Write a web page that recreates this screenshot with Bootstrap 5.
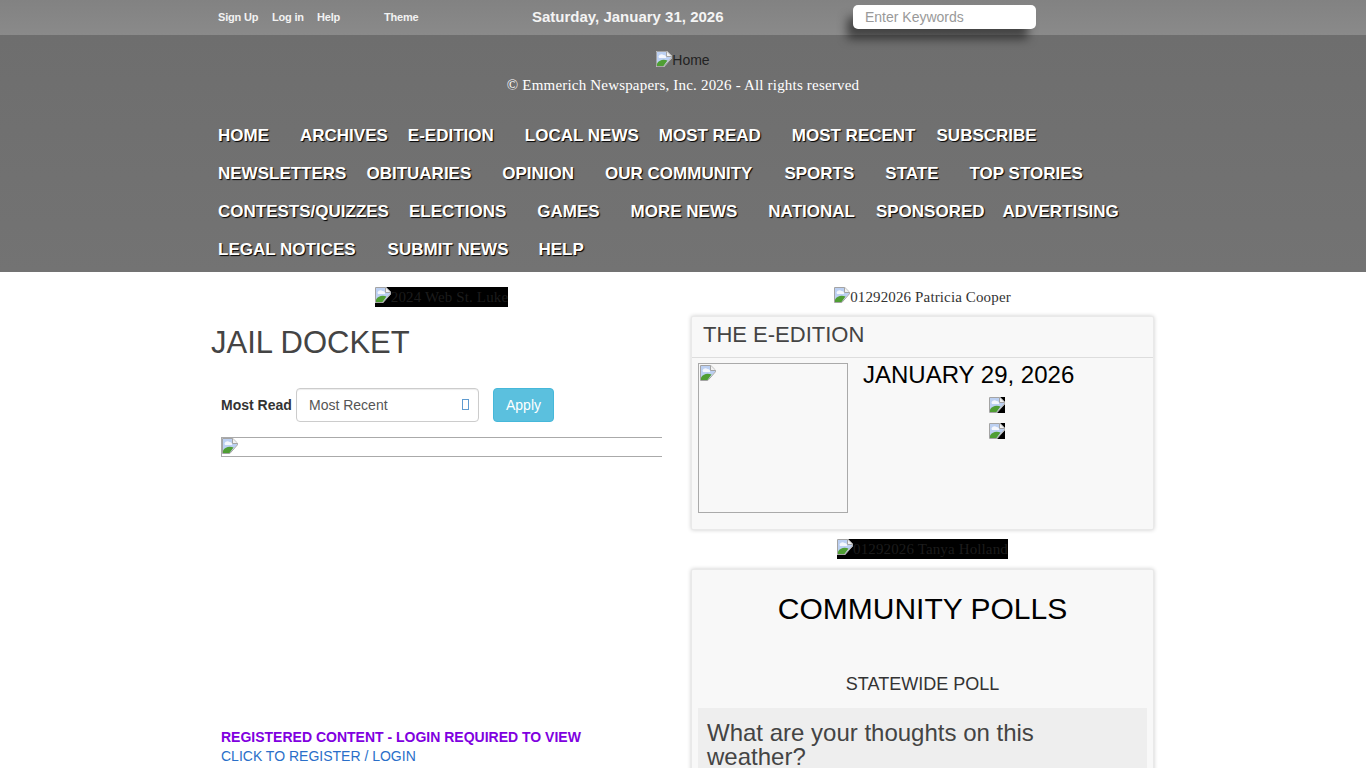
<!DOCTYPE html>
<html lang="en">
<head>
    <meta charset="UTF-8">
    <meta name="viewport" content="width=device-width, initial-scale=1.0">
    <title>Jail Docket</title>
    <link rel="stylesheet" href="https://cdn.jsdelivr.net/npm/bootstrap@5.3.2/dist/css/bootstrap.min.css">
    <style>
        body { font-family: "Liberation Sans", Arial, sans-serif; font-size: 14px; color: #333; background: #fff; }
        a { text-decoration: none; }

        .top-strip { height: 35px; background: linear-gradient(#828282, #8a8a8a); color: #fff; }
        .top-inner, .nav-inner { width: 930px; margin: 0 auto; }
        .top-link { font-size: 11px; font-weight: 700; color: #f2f2f2; letter-spacing: -.2px; }
        .top-link-signup { width: 54px; }
        .top-link-login { width: 45px; }
        .top-link-help { width: 67px; }
        .top-link-theme { width: 148px; }
        .top-date { width: 321px; font-size: 15px; font-weight: 700; color: #f4f4f4; }
        .search-box { width: 183px; height: 24px; border: 0; border-radius: 5px; padding: 0 12px; font-size: 14px; margin-top: -1px; box-shadow: -7px 11px 10px -1px rgba(0, 0, 0, .5); position: relative; z-index: 2; }
        .search-box::placeholder { color: #999; opacity: 1; }

        .head-band { height: 237px; background: linear-gradient(#6e6e6e, #737373); }
        .home-line { padding-top: 16px; height: 34px; line-height: 18px; color: #222; }
        .copy-line { font-family: "Liberation Serif", serif; font-size: 15px; letter-spacing: .19px; line-height: 18px; color: #fff; margin-top: 7px; }
        .nav-wrap { margin-top: 32px; row-gap: 18px; }
        .nav-item-link { font-size: 17px; line-height: 20px; font-weight: 700; color: #fff; text-shadow: 1px 1px 1px #000; white-space: nowrap; }
        .gap-wide { margin-right: 31px; }
        .gap-wider { margin-right: 32px; }
        .gap-snug { margin-right: 30px; }
        .gap-narrow { margin-right: 20px; }
        .gap-mid { margin-right: 21px; }
        .gap-slim { margin-right: 18px; }

        .broken-pic { width: 16px; height: 16px; flex: none; vertical-align: top; }
        .page-cols { width: 944px; margin: 0 auto; padding-top: 15px; }
        .left-col { width: 461px; margin-right: 19px; }
        .right-col { width: 463px; }
        .ad-wrap { height: 20px; }
        .ad-box { height: 20px; line-height: 20px; font-family: "Liberation Serif", serif; font-size: 15px; letter-spacing: .13px; color: #333; }
        .ad-dark { background: #000; color: #1c1c1c; }

        .page-title { font-size: 31px; line-height: 35px; color: #444; margin: 18px 0 0; font-weight: 400; }
        .filter-row { padding: 28px 0 0 10px; }
        .filter-label { font-weight: 700; width: 75px; }
        .pick-wrap { width: 183px; }
        .pick-box { height: 34px; padding: 0 12px; font-size: 14px; color: #555; border: 1px solid #ccc; border-radius: 4px; background-image: none; box-shadow: inset 0 1px 1px rgba(0, 0, 0, .075); }
        .pick-tofu { right: 10px; top: 11px; width: 7px; height: 11px; border: 1px solid #5f9bd0; }
        .apply-btn { width: 61px; height: 34px; margin-left: 14px; padding: 0; font-size: 14px; color: #fff; background: #5bc0de; border: 1px solid #46b8da; border-radius: 4px; }
        .pic-strip { height: 20px; margin: 15px 10px 0 10px; border: 1px solid #aaa; border-right: 0; line-height: 0; padding: 0; }
        .reg-block { margin: 271px 0 0 10px; line-height: 19px; }
        .reg-need { font-weight: 700; color: #8000e0; }
        .reg-link { color: #2a6fc9; }

        .side-card { background: #f8f8f8; border: 1px solid #e9e9e9; box-shadow: 0 0 4px rgba(0, 0, 0, .2); border-radius: 2px; }
        .edition-card { height: 214px; margin-top: 9px; }
        .edition-head { height: 41px; padding: 0 11px; font-size: 22px; line-height: 36px; color: #444; border-bottom: 1px solid #ddd; }
        .edition-body { padding: 5px 6px; }
        .cover-box { width: 150px; height: 150px; border: 1px solid #aaa; padding: 1px; }
        .edition-info { padding-right: 2px; }
        .edition-date { font-size: 24px; line-height: 24px; color: #000; padding: 0 0 2px 15px; }
        .info-pic { height: 26px; }
        .info-pic .broken-pic { background: #000; }
        .second-ad { margin-top: 9px; }
        .polls-card { margin-top: 10px; height: 260px; padding: 0 6px; }
        .polls-title { font-size: 30px; line-height: 36px; color: #000; padding-top: 21px; margin: 0; font-weight: 400; }
        .polls-sub { font-size: 18px; line-height: 20px; color: #333; margin: 47px 0 14px; font-weight: 400; }
        .poll-question { background: #eee; padding: 13px 9px; font-size: 24px; line-height: 24px; color: #444; }
    </style>
</head>
<body>
    <svg width="0" height="0" class="d-block position-absolute">
        <symbol id="brokenIcon" viewBox="0 0 16 16">
            <path d="M0 0H11L16 5V7L8 16H0Z" fill="#fff"/>
            <path d="M1 1H10.5L15 5.5V7L7.5 15H1Z" fill="#bcd0f2"/>
            <path d="M2.5 5.5C3.5 3 6 2.5 7.5 4C9.5 4 10.5 5.5 10 7H3Z" fill="#f4f7fd"/>
            <path d="M1 15V12.5C3.5 9 7 8 11.5 9.5L7.5 15Z" fill="#4f9e33"/>
            <path d="M0.5 15.5V0.5H10.8L15.5 5.2V6.8L7.8 15.5Z" fill="none" stroke="#a4a4a4"/>
            <path d="M10.5 .5V5.5H15.5" fill="#f2f2f2" stroke="#a4a4a4"/>
        </symbol>
    </svg>

    <div class="top-strip">
        <div class="top-inner d-flex align-items-center h-100">
            <a href="#" class="top-link top-link-signup">Sign Up</a>
            <a href="#" class="top-link top-link-login">Log in</a>
            <a href="#" class="top-link top-link-help">Help</a>
            <a href="#" class="top-link top-link-theme">Theme</a>
            <div class="top-date">Saturday, January 31, 2026</div>
            <input type="text" class="search-box" placeholder="Enter Keywords">
        </div>
    </div>

    <div class="head-band">
        <div class="home-line text-center"><svg class="broken-pic"><use href="#brokenIcon"/></svg>Home</div>
        <div class="copy-line text-center">© Emmerich Newspapers, Inc. 2026 - All rights reserved</div>
        <div class="nav-inner nav-wrap d-flex flex-wrap align-items-baseline">
            <a href="#" class="nav-item-link gap-wide">HOME</a>
            <a href="#" class="nav-item-link gap-narrow">ARCHIVES</a>
            <a href="#" class="nav-item-link gap-wide">E-EDITION</a>
            <a href="#" class="nav-item-link gap-narrow">LOCAL NEWS</a>
            <a href="#" class="nav-item-link gap-wide">MOST READ</a>
            <a href="#" class="nav-item-link gap-mid">MOST RECENT</a>
            <a href="#" class="nav-item-link gap-wide">SUBSCRIBE</a>
            <a href="#" class="nav-item-link gap-narrow">NEWSLETTERS</a>
            <a href="#" class="nav-item-link gap-wide">OBITUARIES</a>
            <a href="#" class="nav-item-link gap-wide">OPINION</a>
            <a href="#" class="nav-item-link gap-wider">OUR COMMUNITY</a>
            <a href="#" class="nav-item-link gap-wide">SPORTS</a>
            <a href="#" class="nav-item-link gap-wide">STATE</a>
            <a href="#" class="nav-item-link gap-wide">TOP STORIES</a>
            <a href="#" class="nav-item-link gap-narrow">CONTESTS/QUIZZES</a>
            <a href="#" class="nav-item-link gap-wide">ELECTIONS</a>
            <a href="#" class="nav-item-link gap-wide">GAMES</a>
            <a href="#" class="nav-item-link gap-wide">MORE NEWS</a>
            <a href="#" class="nav-item-link gap-mid">NATIONAL</a>
            <a href="#" class="nav-item-link gap-slim">SPONSORED</a>
            <a href="#" class="nav-item-link">ADVERTISING</a>
            <a href="#" class="nav-item-link gap-wider">LEGAL NOTICES</a>
            <a href="#" class="nav-item-link gap-snug">SUBMIT NEWS</a>
            <a href="#" class="nav-item-link gap-wide">HELP</a>
        </div>
    </div>

    <div class="page-cols d-flex">
        <div class="left-col">
            <div class="ad-wrap d-flex justify-content-center">
                <div class="ad-box ad-dark d-flex"><svg class="broken-pic"><use href="#brokenIcon"/></svg>2024 Web St. Luke</div>
            </div>
            <h1 class="page-title">JAIL DOCKET</h1>
            <div class="filter-row d-flex align-items-center">
                <label class="filter-label">Most Read</label>
                <div class="pick-wrap position-relative">
                    <select class="form-select pick-box">
                        <option>Most Recent</option>
                        <option>Most Read</option>
                    </select>
                    <span class="pick-tofu position-absolute"></span>
                </div>
                <button class="btn apply-btn">Apply</button>
            </div>
            <div class="pic-strip"><svg class="broken-pic"><use href="#brokenIcon"/></svg></div>
            <div class="reg-block">
                <div class="reg-need">REGISTERED CONTENT - LOGIN REQUIRED TO VIEW</div>
                <a href="#" class="reg-link">CLICK TO REGISTER / LOGIN</a>
            </div>
        </div>

        <div class="right-col">
            <div class="ad-wrap d-flex justify-content-center">
                <div class="ad-box d-flex"><svg class="broken-pic"><use href="#brokenIcon"/></svg>01292026 Patricia Cooper</div>
            </div>
            <div class="side-card edition-card">
                <div class="edition-head">THE E-EDITION</div>
                <div class="edition-body d-flex">
                    <div class="cover-box"><svg class="broken-pic d-block"><use href="#brokenIcon"/></svg></div>
                    <div class="edition-info flex-grow-1">
                        <div class="edition-date">JANUARY 29, 2026</div>
                        <div class="info-pic text-center pt-2"><svg class="broken-pic"><use href="#brokenIcon"/></svg></div>
                        <div class="info-pic text-center pt-2"><svg class="broken-pic"><use href="#brokenIcon"/></svg></div>
                    </div>
                </div>
            </div>
            <div class="ad-wrap second-ad d-flex justify-content-center">
                <div class="ad-box ad-dark d-flex"><svg class="broken-pic"><use href="#brokenIcon"/></svg>01292026 Tanya Holland</div>
            </div>
            <div class="side-card polls-card">
                <h2 class="polls-title text-center">COMMUNITY POLLS</h2>
                <h3 class="polls-sub text-center">STATEWIDE POLL</h3>
                <div class="poll-question">What are your thoughts on this weather?</div>
            </div>
        </div>
    </div>
</body>
</html>
